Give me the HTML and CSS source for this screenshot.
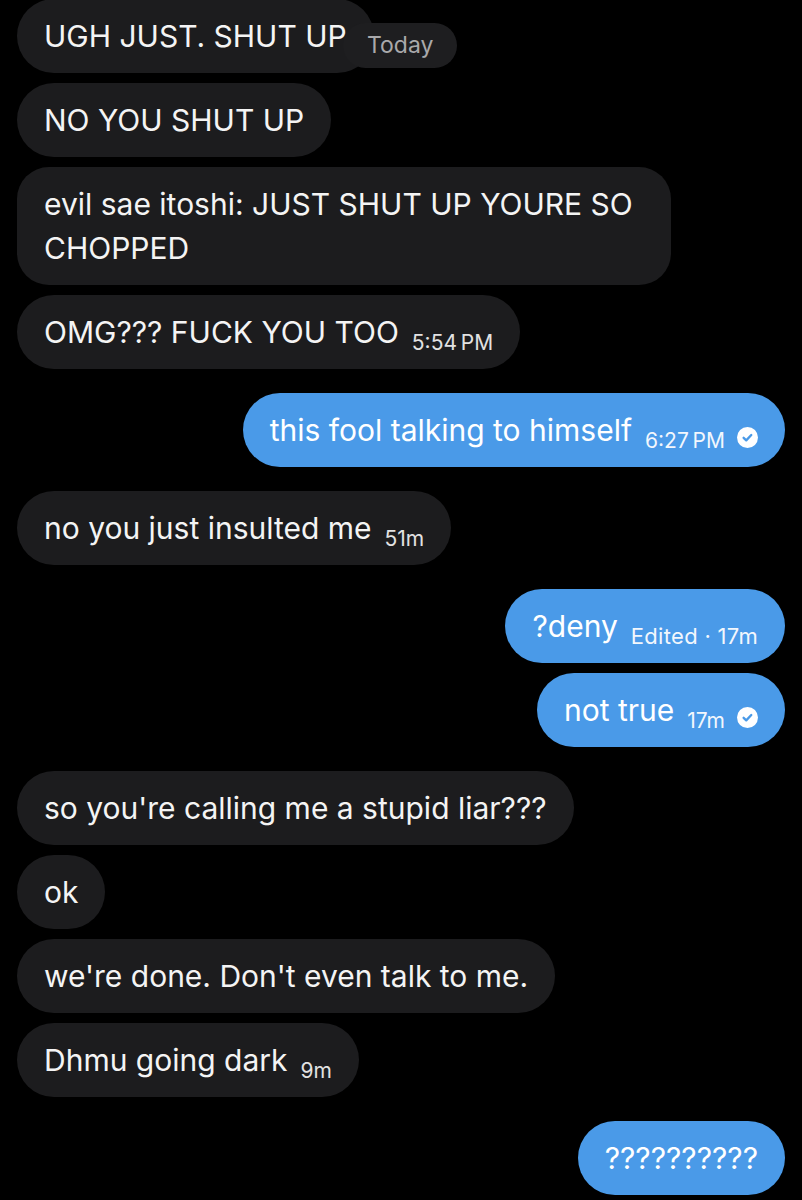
FILE: index.html
```html
<!DOCTYPE html>
<html lang="en">
<head>
<meta charset="utf-8">
<title>Chat</title>
<link rel="stylesheet" href="styles.css">
</head>
<body>
<main class="chat">
  <div class="row in first">
    <div class="bubble">UGH JUST. SHUT UP</div>
    <span class="date-pill">Today</span>
  </div>
  <div class="row in tight">
    <div class="bubble">NO YOU SHUT UP</div>
  </div>
  <div class="row in tight">
    <div class="bubble multi">evil sae itoshi: JUST SHUT UP YOURE SO CHOPPED</div>
  </div>
  <div class="row in tight">
    <div class="bubble">OMG??? FUCK YOU TOO<span class="meta">5:54&#8201;PM</span></div>
  </div>
  <div class="row out">
    <div class="bubble">this fool talking to himself<span class="meta">6:27&#8201;PM</span><span class="seen"><svg viewBox="0 0 20 20" width="21" height="21"><circle cx="10" cy="10" r="10" fill="#fff"/><path d="M6.3 10.3 L8.8 12.7 L13.6 7.6" fill="none" stroke="#4a9ae8" stroke-width="2.2" stroke-linecap="round" stroke-linejoin="round"/></svg></span></div>
  </div>
  <div class="row in">
    <div class="bubble">no you just insulted me<span class="meta">51m</span></div>
  </div>
  <div class="row out">
    <div class="bubble">?deny<span class="meta edited">Edited &middot; 17m</span></div>
  </div>
  <div class="row out tight">
    <div class="bubble">not true<span class="meta">17m</span><span class="seen"><svg viewBox="0 0 20 20" width="21" height="21"><circle cx="10" cy="10" r="10" fill="#fff"/><path d="M6.3 10.3 L8.8 12.7 L13.6 7.6" fill="none" stroke="#4a9ae8" stroke-width="2.2" stroke-linecap="round" stroke-linejoin="round"/></svg></span></div>
  </div>
  <div class="row in">
    <div class="bubble">so you're calling me a stupid liar???</div>
  </div>
  <div class="row in tight">
    <div class="bubble">ok</div>
  </div>
  <div class="row in tight">
    <div class="bubble">we're done. Don't even talk to me.</div>
  </div>
  <div class="row in tight">
    <div class="bubble">Dhmu going dark<span class="meta">9m</span></div>
  </div>
  <div class="row out">
    <div class="bubble">??????????</div>
  </div>
</main>
</body>
</html>
```
FILE: styles.css
```css
html, body {
  margin: 0;
  padding: 0;
  background: #000;
}

body {
  width: 802px;
  height: 1200px;
  overflow: hidden;
  font-family: Inter, "Liberation Sans", sans-serif;
  color: #f4f4f4;
}

.chat {
  display: flex;
  flex-direction: column;
  padding: 0 17px;
  margin-top: -1px;
}

.row {
  display: flex;
  margin-top: 24px;
  position: relative;
}

.row.first { margin-top: 0; }
.row.tight { margin-top: 10px; }

.row.in { justify-content: flex-start; }
.row.out { justify-content: flex-end; }

.bubble {
  font-size: 30px;
  line-height: 44px;
  padding: 15px 27px;
  border-radius: 37px;
  background: #1c1c1e;
  white-space: nowrap;
  font-weight: 400;
}

.bubble.multi {
  white-space: normal;
  max-width: 600px;
  border-radius: 32px;
}

.row.out .bubble {
  background: #4a9ae8;
  color: #fff;
}

.meta {
  display: inline-block;
  font-size: 21px;
  line-height: 20px;
  margin-left: 13px;
  vertical-align: -7px;
  color: #e2e2e2;
}

.meta.edited {
  font-size: 22px;
  letter-spacing: 0.3px;
}

.row.out .meta { color: #f2f7fd; }

.seen {
  display: inline-block;
  margin-left: 12px;
  vertical-align: -7px;
  line-height: 0;
}

.date-pill {
  position: absolute;
  left: 326px;
  top: 24px;
  height: 45px;
  padding: 0 24px;
  border-radius: 23px;
  background: #1e1e20;
  color: #a9a9ab;
  font-size: 23px;
  line-height: 45px;
}
```
